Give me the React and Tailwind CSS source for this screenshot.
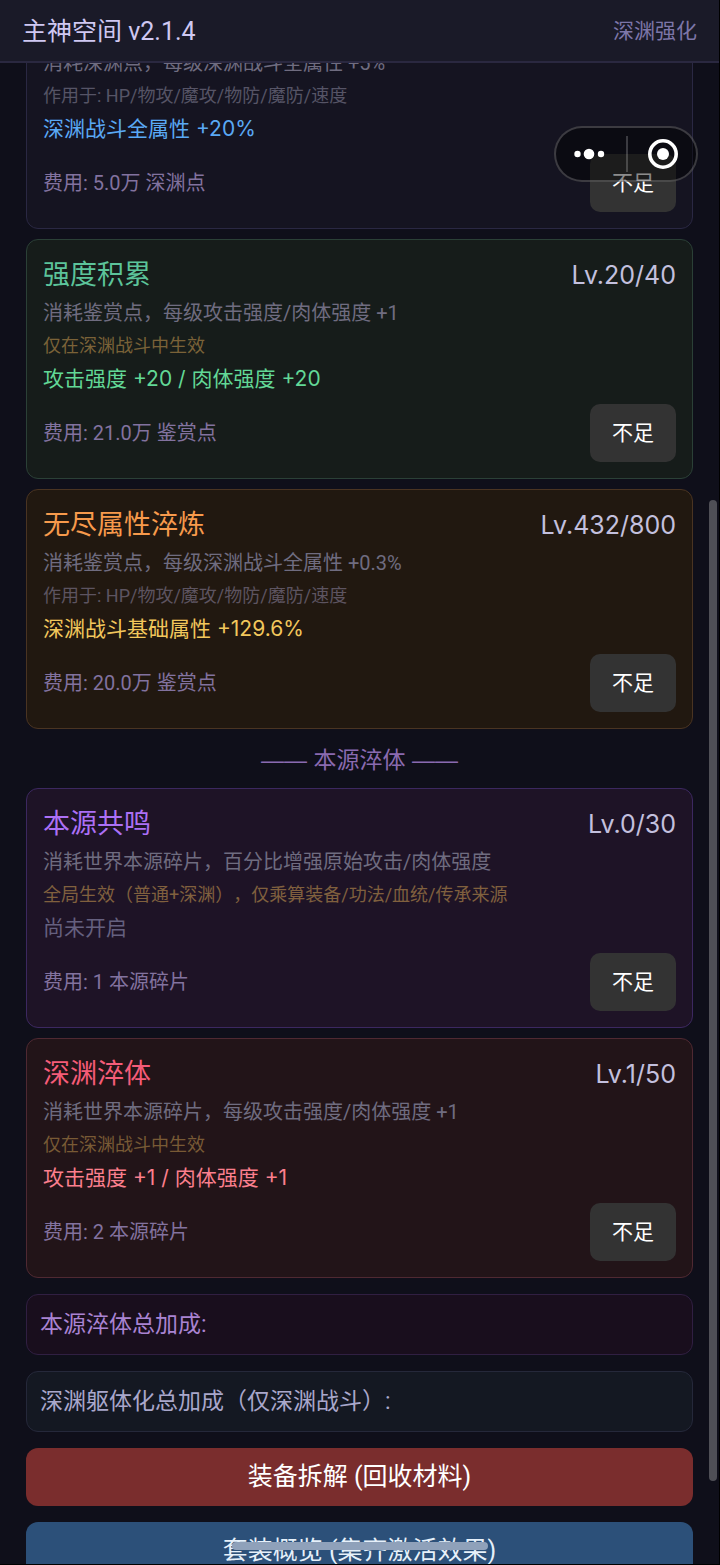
import React from 'react';
import clsx from 'clsx';

const upgrades = [
  {
    id: 'abyss-all',
    desc: '消耗深渊点，每级深渊战斗全属性 +5%',
    note: '作用于: HP/物攻/魔攻/物防/魔防/速度',
    noteColor: 'text-[#565466]',
    bonus: '深渊战斗全属性 +20%',
    bonusColor: 'text-[#5aa9f5]',
    cost: '费用: 5.0万 深渊点',
    box: 'bg-[#151421] border-[#2a2843]',
  },
  {
    id: 'strength',
    title: '强度积累',
    titleColor: 'text-[#5cc49a]',
    level: 'Lv.20/40',
    desc: '消耗鉴赏点，每级攻击强度/肉体强度 +1',
    note: '仅在深渊战斗中生效',
    noteColor: 'text-[#7a6238]',
    bonus: '攻击强度 +20 / 肉体强度 +20',
    bonusColor: 'text-[#62d896]',
    cost: '费用: 21.0万 鉴赏点',
    box: 'bg-[#161c1a] border-[#2b4037]',
  },
  {
    id: 'endless',
    title: '无尽属性淬炼',
    titleColor: 'text-[#f79a4c]',
    level: 'Lv.432/800',
    desc: '消耗鉴赏点，每级深渊战斗全属性 +0.3%',
    note: '作用于: HP/物攻/魔攻/物防/魔防/速度',
    noteColor: 'text-[#5d5460]',
    bonus: '深渊战斗基础属性 +129.6%',
    bonusColor: 'text-[#f2c75c]',
    cost: '费用: 20.0万 鉴赏点',
    box: 'bg-[#211810] border-[#4a3422]',
  },
];

const originUpgrades = [
  {
    id: 'resonance',
    title: '本源共鸣',
    titleColor: 'text-[#ac70f6]',
    level: 'Lv.0/30',
    desc: '消耗世界本源碎片，百分比增强原始攻击/肉体强度',
    note: '全局生效（普通+深渊），仅乘算装备/功法/血统/传承来源',
    noteColor: 'text-[#80603e]',
    bonus: '尚未开启',
    bonusColor: 'text-[#65607f]',
    cost: '费用: 1 本源碎片',
    box: 'bg-[#1e1326] border-[#3c2860]',
  },
  {
    id: 'body',
    title: '深渊淬体',
    titleColor: 'text-[#f55c78]',
    level: 'Lv.1/50',
    desc: '消耗世界本源碎片，每级攻击强度/肉体强度 +1',
    note: '仅在深渊战斗中生效',
    noteColor: 'text-[#785a35]',
    bonus: '攻击强度 +1 / 肉体强度 +1',
    bonusColor: 'text-[#fb7f8d]',
    cost: '费用: 2 本源碎片',
    box: 'bg-[#221418] border-[#4f2932]',
  },
];

const UpgradeCard = ({ item }) => (
  <section className={clsx('flex flex-col gap-px rounded-xl border px-4 pb-4 pt-[17px]', item.box)}>
    {item.title && (
      <div className="mb-[3px] flex items-center justify-between leading-9">
        <h2 className={clsx('text-[27px]', item.titleColor)}>{item.title}</h2>
        <span className="font-['Inter',sans-serif] text-[25px] text-[#c3c0de]">{item.level}</span>
      </div>
    )}
    <p className="text-[20px] leading-8 text-[#6f6c80]">{item.desc}</p>
    <p className={clsx('text-[18px] leading-8 [text-spacing-trim:space-all]', item.noteColor)}>{item.note}</p>
    <p className={clsx("font-['Inter','Noto_Sans_CJK_SC',sans-serif] text-[21px] leading-8", item.bonusColor)}>
      {item.bonus}
    </p>
    <div className="mt-2 flex items-center justify-between">
      <span className="text-[20px] text-[#82729f]">{item.cost}</span>
      <button type="button" className="rounded-[10px] bg-[#333333] px-[22px] py-[13px] text-[21px] leading-8 text-white">
        不足
      </button>
    </div>
  </section>
);

// Floating mini-program capsule
const Capsule = () => (
  <div className="absolute right-[21px] top-[126px] z-20 flex h-14 w-36 items-center rounded-full border-2 border-white/20 bg-black/45">
    <button type="button" aria-label="更多" className="flex h-full flex-1 items-center justify-center pr-1">
      <svg width="32" height="12" viewBox="0 0 32 12" fill="#fff">
        <circle cx="4.5" cy="6" r="3.2" />
        <circle cx="16" cy="6" r="5.3" />
        <circle cx="28" cy="6" r="3.2" />
      </svg>
    </button>
    <span className="h-9 w-0.5 bg-white/20" />
    <button type="button" aria-label="关闭" className="flex h-full flex-1 items-center justify-center pl-0.5">
      <svg width="32" height="32" viewBox="0 0 32 32" fill="none">
        <circle cx="16" cy="16" r="13.2" stroke="#fff" strokeWidth="3.6" />
        <circle cx="16" cy="16" r="6" fill="#fff" />
      </svg>
    </button>
  </div>
);

export default function App() {
  return (
    <div
      lang="zh-CN"
      className="relative flex h-screen flex-col overflow-hidden border-b border-r border-black bg-[#0f0f1a] font-['Roboto','Noto_Sans_CJK_SC',sans-serif]"
    >
      <header className="z-10 flex shrink-0 items-center justify-between border-b-2 border-[#2a2840] bg-[#1a1a28] px-[22px] pb-[15px] pt-[17px] leading-[29px]">
        <h1 className="text-[25px] text-[#cfc8f2]">主神空间 v2.1.4</h1>
        <span className="text-[21px] text-[#7d76a8]">深渊强化</span>
      </header>

      <main className="min-h-0 flex-1 overflow-hidden">
        <div className="-mt-[34px] flex flex-col gap-4 px-[26px]">
          <div className="flex flex-col gap-[10px]">
            {upgrades.map((item) => (
              <UpgradeCard key={item.id} item={item} />
            ))}
            <h3 className="pt-1 text-center font-['Liberation_Sans','Noto_Sans_CJK_SC',sans-serif] text-[23px] leading-[35px] text-[#8a6ab0]">
              —— 本源淬体 ——
            </h3>
            {originUpgrades.map((item) => (
              <UpgradeCard key={item.id} item={item} />
            ))}
          </div>

          <p className="rounded-xl border border-[#301f42] bg-[#190e1d] px-[13px] py-3 text-[23px] leading-[35px] text-[#a983d2]">
            本源淬体总加成:
          </p>
          <p className="rounded-xl border border-[#25283a] bg-[#141822] px-[13px] py-3 text-[23px] leading-[35px] text-[#a9a7cb]">
            深渊躯体化总加成（仅深渊战斗）:
          </p>
          <button type="button" className="rounded-xl bg-[#7a2d2d] py-[13px] text-[25px] leading-8 text-white">
            装备拆解 (回收材料)
          </button>
          <button type="button" className="rounded-xl bg-[#2c5079] py-[13px] text-[25px] leading-8 text-[#e6f0fa]">
            套装概览 (集齐激活效果)
          </button>
        </div>
      </main>

      <Capsule />

      {/* Scroll thumb */}
      <div className="absolute bottom-[83px] right-[2px] top-[32%] w-2 rounded-full bg-[#4f4f56]" />

      {/* System home indicator */}
      <div className="absolute bottom-[14px] left-1/2 z-20 h-2 w-64 -translate-x-1/2 rounded-full bg-[#8fa1ba]" />
    </div>
  );
}
